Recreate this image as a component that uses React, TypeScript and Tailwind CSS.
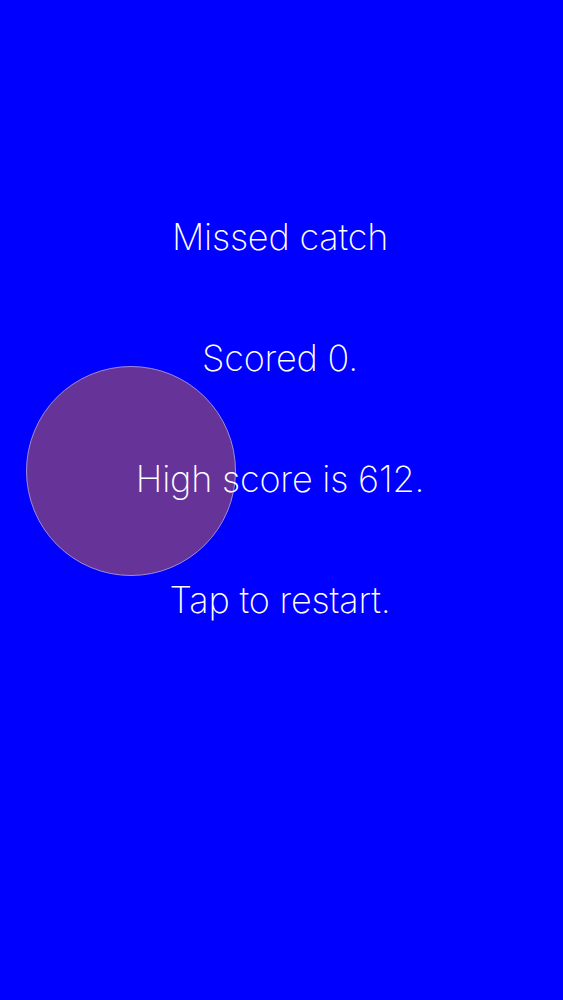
import React from "react";

export default function App() {
  return (
    <div className="relative w-[563px] h-[1000px] overflow-hidden bg-[#0000ff]">
      <div
        className="absolute left-[26px] top-[366px] w-[210px] h-[210px] rounded-full bg-[#663399] border border-[#a08ad8]"
      />
      <div
        className="relative flex flex-col items-center pr-[3px] pt-[217px] gap-[81px] text-white font-extralight text-[36px] leading-[40px] tracking-[-0.2px]"
        style={{ fontFamily: "Inter, 'Noto Sans', sans-serif" }}
      >
        <div>Missed catch</div>
        <div>Scored 0.</div>
        <div>High score is 612.</div>
        <div>Tap to restart.</div>
      </div>
    </div>
  );
}
